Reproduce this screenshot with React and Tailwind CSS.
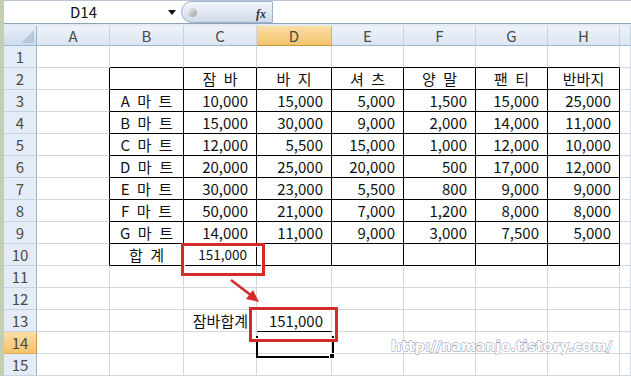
import React from "react";

const COLS = ["A", "B", "C", "D", "E", "F", "G", "H", "I"];
const WIDTHS = ["w-[73px]", "w-[74px]", "w-[73px]", "w-[75px]", "w-[72px]", "w-[72px]", "w-[72px]", "w-[72px]", "flex-1"];

const S = "\u2002";
const data = {
  2: { B: "", C: `잠${S}바`, D: `바${S}지`, E: `셔${S}츠`, F: `양${S}말`, G: `팬${S}티`, H: "반바지" },
  3: { B: `A${S}마${S}트`, C: "10,000", D: "15,000", E: "5,000", F: "1,500", G: "15,000", H: "25,000" },
  4: { B: `B${S}마${S}트`, C: "15,000", D: "30,000", E: "9,000", F: "2,000", G: "14,000", H: "11,000" },
  5: { B: `C${S}마${S}트`, C: "12,000", D: "5,500", E: "15,000", F: "1,000", G: "12,000", H: "10,000" },
  6: { B: `D${S}마${S}트`, C: "20,000", D: "25,000", E: "20,000", F: "500", G: "17,000", H: "12,000" },
  7: { B: `E${S}마${S}트`, C: "30,000", D: "23,000", E: "5,500", F: "800", G: "9,000", H: "9,000" },
  8: { B: `F${S}마${S}트`, C: "50,000", D: "21,000", E: "7,000", F: "1,200", G: "8,000", H: "8,000" },
  9: { B: `G${S}마${S}트`, C: "14,000", D: "11,000", E: "9,000", F: "3,000", G: "7,500", H: "5,000" },
  10: { B: `합${S}계`, C: "151,000" },
  13: { C: "잠바합계", D: "151,000" },
};

const inTable = (r, ci) => r >= 2 && r <= 10 && ci >= 1 && ci <= 7;

function Cell({ r, ci }) {
  const col = COLS[ci];
  const text = data[r] && data[r][col] ? data[r][col] : "";
  const rightBlack = inTable(r, ci) || inTable(r, ci + 1);
  const bottomBlack = inTable(r, ci) || inTable(r + 1, ci) || (r === 13 && ci === 3);
  const center = r === 2 || ci === 1;
  return (
    <div
      className={`${WIDTHS[ci]} h-[22px] shrink-0 border-r border-b flex items-center bg-white ${
        rightBlack ? "border-r-black" : "border-r-[#d0d7e5]"
      } ${bottomBlack ? "border-b-black" : "border-b-[#d0d7e5]"} ${
        center ? "justify-center" : "justify-end pr-[8px]"
      }`}
    >
      <span className={`leading-none whitespace-pre text-[#111] ${r === 10 && ci === 2 ? "text-[13.5px] pr-[1px]" : "text-[15px]"}`}>
        {text}
      </span>
    </div>
  );
}

export default function App() {
  const rows = Array.from({ length: 15 }, (_, i) => i + 1);
  return (
    <div className="relative w-[631px] h-[376px] overflow-hidden bg-white flex [font-family:'Noto_Sans_CJK_KR','Noto_Sans',sans-serif]">
      <div className="w-[4px] h-full bg-[#c3cfb3] shrink-0" />
      <div className="flex-1 flex flex-col">
        {/* formula bar */}
        <div className="h-[28px] flex flex-col bg-[#e3eaf4]">
          <div className="h-[24px] flex border-t border-t-[#b7c5d6] border-b border-b-[#8fa3bd] bg-white">
            <div className="w-[177px] flex items-center relative">
              <span className="absolute left-[66px] top-[2px] text-[15px] text-[#111] leading-none pt-[1px]">D14</span>
              <svg className="absolute left-[164px] top-[9px]" width="8" height="5" viewBox="0 0 8 5">
                <path d="M0 0 H8 L4 5 Z" fill="#111" />
              </svg>
            </div>
            <div className="w-[92px] h-full rounded-l-full border border-[#9fb1c8] bg-gradient-to-b from-[#f4f7fb] to-[#cfdbea] relative">
              <div className="absolute left-[6px] top-[6px] w-[9px] h-[9px] rounded-full bg-gradient-to-br from-[#f2f2f2] to-[#9a9fa6]" />
              <span className="absolute right-[6px] top-[3px] text-[12px] italic font-bold text-[#333] [font-family:'Liberation_Serif',serif]">fx</span>
            </div>
            <div className="flex-1 bg-white" />
          </div>
        </div>
        {/* column header */}
        <div className="flex h-[22px]">
          <div className="w-[33px] h-full shrink-0 bg-gradient-to-b from-[#e6eef8] to-[#cfdcec] border-r border-b border-[#9eb6ce] relative">
            <svg className="absolute right-[2px] bottom-[2px]" width="13" height="13" viewBox="0 0 13 13">
              <path d="M13 0 V13 H0 Z" fill="#b7c8dc" />
            </svg>
          </div>
          {COLS.map((c, ci) => (
            <div
              key={c}
              className={`${WIDTHS[ci]} h-full shrink-0 flex items-center justify-center border-r border-b text-[15px] leading-none text-[#4a4a4a] ${
                c === "D"
                  ? "bg-gradient-to-b from-[#fbdda6] to-[#f3c36b] border-r-[#e0ad5a] border-b-[#c8954a]"
                  : "bg-gradient-to-b from-[#eef3fa] to-[#dbe5f1] border-r-[#c5d3e3] border-b-[#9eb6ce]"
              }`}
            >
              {c === "I" ? "" : c}
            </div>
          ))}
        </div>
        {/* rows */}
        {rows.map((r) => (
          <div key={r} className="flex h-[22px]">
            <div
              className={`w-[33px] h-full shrink-0 flex items-center justify-center border-r border-b text-[15px] leading-none text-[#4a4a4a] ${
                r === 14
                  ? "bg-gradient-to-b from-[#fbdda6] to-[#f3c36b] border-r-[#c8954a] border-b-[#e0ad5a]"
                  : "bg-[#e4ecf7] border-r-[#9eb6ce] border-b-[#c5d3e3]"
              }`}
            >
              {r}
            </div>
            {COLS.map((c, ci) => (
              <Cell key={c} r={r} ci={ci} />
            ))}
          </div>
        ))}
      </div>

      {/* selection D14 */}
      <div className="absolute left-[256px] top-[336px] w-[78px] h-[22px] border-2 border-t-0 border-black" />
      <div className="absolute left-[329px] top-[353px] w-[6px] h-[6px] bg-black border border-white" />

      {/* red boxes */}
      <div className="absolute left-[181px] top-[243px] w-[84px] h-[33px] border-[3px] border-[#d52a2a] shadow-[inset_0_0_0_1px_#ffffff]" />
      <div className="absolute left-[249px] top-[307px] w-[89px] h-[35px] border-[3px] border-[#d52a2a] shadow-[inset_0_0_0_1px_#ffffff]" />

      {/* arrow */}
      <svg className="absolute left-0 top-0" width="631" height="376" viewBox="0 0 631 376">
        <line x1="231" y1="280" x2="252" y2="296" stroke="#d52a2a" strokeWidth="2.5" />
        <path d="M259 302 L246 299 L253 290 Z" fill="#d52a2a" />
      </svg>

      {/* watermark */}
      <div className="absolute left-[391px] top-[339px] text-[14.3px] font-bold leading-none text-white [-webkit-text-stroke:1px_#8797b3] [paint-order:stroke_fill] [font-family:'DejaVu_Sans',sans-serif]">
        http://namanjo.tistory.com/
      </div>
    </div>
  );
}
